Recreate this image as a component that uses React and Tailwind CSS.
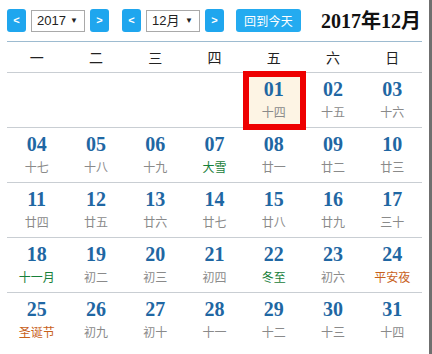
import React from 'react';

const weekdays = ['一', '二', '三', '四', '五', '六', '日'];

// lunar colour: g = solar term (green), h = holiday (orange)
const weeks = [
  [null, null, null, null, ['01', '十四'], ['02', '十五'], ['03', '十六']],
  [['04', '十七'], ['05', '十八'], ['06', '十九'], ['07', '大雪', 'g'], ['08', '廿一'], ['09', '廿二'], ['10', '廿三']],
  [['11', '廿四'], ['12', '廿五'], ['13', '廿六'], ['14', '廿七'], ['15', '廿八'], ['16', '廿九'], ['17', '三十']],
  [['18', '十一月', 'g'], ['19', '初二'], ['20', '初三'], ['21', '初四'], ['22', '冬至', 'g'], ['23', '初六'], ['24', '平安夜', 'h']],
  [['25', '圣诞节', 'h'], ['26', '初九'], ['27', '初十'], ['28', '十一'], ['29', '十二'], ['30', '十三'], ['31', '十四']]
];

const cjk = { fontFamily: '"Noto Sans CJK SC", sans-serif' };
const sans = { fontFamily: '"Liberation Sans", "Noto Sans CJK SC", sans-serif' };
const serif = { fontFamily: '"Liberation Serif", "Noto Sans CJK SC", serif' };

const ArrowButton = ({ label }) => (
  <button className="w-[19px] h-[23px] rounded-[3px] bg-[#1fa6ee] text-white text-[11px] font-bold leading-none flex items-center justify-center" style={sans}>
    {label}
  </button>
);

const Select = ({ value }) => (
  <div className="w-[54px] h-[22px] border border-[#a9a9a9] bg-white flex items-center justify-between pl-[5px] pr-[6px] text-[13px] text-[#222]" style={sans}>
    <span>{value}</span>
    <span className="text-[8px]">▼</span>
  </div>
);

const DayCell = ({ day, selected }) => {
  if (!day) return <div />;
  const [num, lunar, kind] = day;
  const lunarColor = kind === 'g' ? 'text-[#17803a]' : kind === 'h' ? 'text-[#c8611b]' : 'text-[#8a8a8a]';
  return (
    <div className="relative flex flex-col items-center pt-[6px]">
      {selected && (
        <div className="absolute -left-[1px] -right-[3px] -top-[2px] -bottom-[3px] border-[6px] border-[#ee0000] bg-[#fdf4e4] z-10" />
      )}
      <div className="relative z-20 text-[20px] leading-[20px] font-bold text-[#1f67a3]" style={serif}>
        {num}
      </div>
      <div className={`relative z-20 mt-[5px] text-[12px] leading-[16px] ${lunarColor}`} style={cjk}>
        {lunar}
      </div>
    </div>
  );
};

export default function App() {
  return (
    <div className="w-[432px] h-[354px] bg-white border-r-[3px] border-[#6f6f6f] overflow-hidden">
      {/* Toolbar */}
      <div className="h-[41px] mx-[7px] flex items-start pt-[9px]">
        <ArrowButton label="<" />
        <div className="ml-[5px] mt-[1px]"><Select value="2017" /></div>
        <div className="ml-[5px]"><ArrowButton label=">" /></div>
        <div className="ml-[13px]"><ArrowButton label="<" /></div>
        <div className="ml-[5px] mt-[1px]"><Select value="12月" /></div>
        <div className="ml-[5px]"><ArrowButton label=">" /></div>
        <button className="ml-[12px] w-[65px] h-[23px] rounded-[3px] bg-[#24abf0] text-white text-[12px] tracking-[0.3px] leading-none flex items-center justify-center" style={cjk}>
          回到今天
        </button>
        <div className="ml-auto mr-[1px] mt-[1px] text-[20px] leading-[22px] font-bold text-[#111]" style={serif}>
          2017年12月
        </div>
      </div>
      <div className="mx-[7px] h-[1px] bg-[#9dbbd0]" />

      {/* Weekday header */}
      <div className="mx-[7px] grid grid-cols-7 h-[31px] border-b border-[#c9ced3] items-center text-[14px] text-[#222]" style={cjk}>
        {weekdays.map(w => (
          <div key={w} className="text-center">{w}</div>
        ))}
      </div>

      {/* Days */}
      {weeks.map((week, i) => (
        <div key={i} className={`mx-[7px] grid grid-cols-7 h-[55px] ${i < weeks.length - 1 ? 'border-b border-[#c9ced3]' : ''}`}>
          {week.map((d, j) => (
            <DayCell key={j} day={d} selected={i === 0 && j === 4} />
          ))}
        </div>
      ))}
    </div>
  );
}
